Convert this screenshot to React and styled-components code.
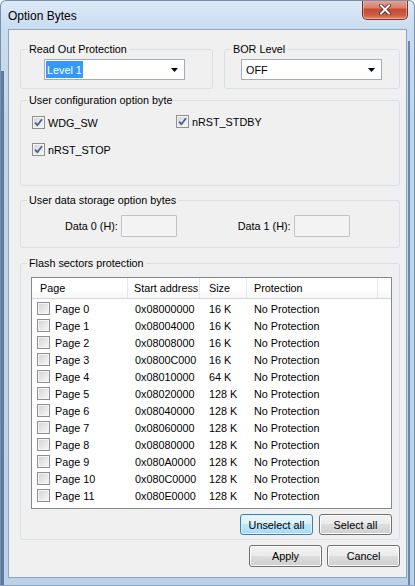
import React from 'react';
import styled, { createGlobalStyle } from 'styled-components';

const GlobalStyle = createGlobalStyle`
  html, body {
    margin: 0;
    padding: 0;
    background: #ffffff;
  }
  body {
    font-family: "Liberation Sans", Arial, sans-serif;
    font-size: 10.8px;
    color: #000;
  }
`;

const Window = styled.div`
  width: 415px;
  height: 586px;
  box-sizing: border-box;
  display: flex;
  flex-direction: column;
  padding: 0 7px 7px;
  border: 1px solid #7890ad;
  border-bottom-color: #8aa0ba;
  border-radius: 6px 6px 0 0;
  background:
    linear-gradient(to right, #5f7a9b, #5f7a9b) 0 70px / 3px 100% no-repeat,
    linear-gradient(to right, #6a86a8, #6a86a8) calc(100% - 4px) 40px / 2px 100% no-repeat,
    linear-gradient(180deg, #dce9f7 0, #cadcf0 28px, #c0d5ec 120px, #bcd2ea 100%);
  overflow: hidden;
`;

const TitleBar = styled.div`
  height: 28px;
  flex: none;
  display: flex;
  align-items: center;
  justify-content: space-between;
`;

const Title = styled.span`
  font-size: 12px;
  margin-top: 1px;
  color: #000;
`;

const CloseButton = styled.div`
  align-self: flex-start;
  width: 46px;
  height: 20px;
  margin-top: -1px;
  margin-right: -1px;
  box-sizing: border-box;
  display: flex;
  align-items: center;
  justify-content: center;
  border: 1px solid #7d3025;
  border-top: none;
  border-radius: 0 0 5px 5px;
  background: linear-gradient(180deg, #e6a798 0%, #d8806f 40%, #c64b35 50%, #cf5b43 80%, #e08a6c 100%);
  box-shadow: inset 0 0 0 1px rgba(255, 220, 210, 0.45);
`;

const Client = styled.div`
  flex: 1;
  box-sizing: border-box;
  background: #f0f0f0;
  border: 1px solid #8ea4bd;
  padding: 13px 6px 0 11px;
  display: flex;
  flex-direction: column;
`;

const GroupBox = styled.fieldset`
  margin: ${(p) => p.$top || 0}px 0 0 0;
  padding: 0;
  min-width: 0;
  border: 1px solid #d5dfe5;
  border-radius: 3px;
`;

const Legend = styled.legend`
  margin-left: 6px;
  padding: 0 2px;
  line-height: 13px;
`;

const GroupBody = styled.div`
  padding: ${(p) => p.$pad};
`;

const TopRow = styled.div`
  display: grid;
  grid-template-columns: 193px 1fr;
  column-gap: 11px;
`;

const Combo = styled.div`
  width: 141px;
  height: 21px;
  box-sizing: border-box;
  border: 1px solid #a5acb5;
  background: #fff;
  display: flex;
  align-items: stretch;
  padding: 1px;
`;

const ComboValue = styled.span`
  display: flex;
  align-items: center;
  padding: 0 1px;
  margin-left: ${(p) => (p.$selected ? 0 : 2)}px;
  background: ${(p) => (p.$selected ? '#3399ff' : 'transparent')};
  color: ${(p) => (p.$selected ? '#fff' : '#000')};
`;

const ComboArrow = styled.svg`
  margin: auto 5px auto auto;
`;

const CheckGrid = styled.div`
  display: grid;
  grid-template-columns: 144px 1fr;
  row-gap: 14px;
`;

const CheckItem = styled.label`
  display: flex;
  align-items: center;
  gap: 3px;
  height: 13px;
  margin-top: ${(p) => p.$shift || 0}px;
`;

const Box = styled.span`
  width: 13px;
  height: 13px;
  flex: none;
  box-sizing: border-box;
  border: 1px solid #8e8f8f;
  background: linear-gradient(135deg, #d2d2d2 0%, #e6e6e6 50%, #f8f8f8 100%);
  box-shadow: inset 0 0 0 1px #f4f4f4;
  display: flex;
  align-items: center;
  justify-content: center;
`;

const DataRow = styled.div`
  display: flex;
  align-items: center;
`;

const DataLabel = styled.span`
  margin-left: ${(p) => p.$ml}px;
  margin-right: 3px;
`;

const DataInput = styled.div`
  width: 56px;
  height: 22px;
  box-sizing: border-box;
  border: 1px solid #c2c2c2;
  border-radius: 1px;
  background: #f3f3f3;
`;

const ListView = styled.div`
  height: 232px;
  box-sizing: border-box;
  border: 1px solid #828790;
  background: #fff;
`;

const columns = '96px 72px 47px 131px 1fr';

const HeaderRow = styled.div`
  display: grid;
  grid-template-columns: ${columns};
  height: 20px;
  border-bottom: 1px solid #d5d5d5;
  background: linear-gradient(180deg, #ffffff 0%, #ffffff 50%, #f6f7f8 100%);
`;

const HeaderCell = styled.div`
  line-height: 20px;
  padding-left: ${(p) => p.$pl || 0}px;
  border-right: ${(p) => (p.$last ? 'none' : '1px solid #e3e6ea')};
  white-space: nowrap;
  overflow: hidden;
`;

const Rows = styled.div`
  padding-top: 1px;
`;

const Row = styled.div`
  display: grid;
  grid-template-columns: ${columns};
  height: 17px;
  align-items: center;
`;

const Cell = styled.div`
  padding-left: ${(p) => p.$pl}px;
  display: flex;
  align-items: center;
  gap: 5px;
  white-space: nowrap;
`;

const ButtonRow = styled.div`
  display: flex;
  justify-content: flex-end;
  gap: ${(p) => p.$gap}px;
  margin-top: ${(p) => p.$mt}px;
`;

const Button = styled.button`
  width: 73px;
  height: ${(p) => p.$h}px;
  box-sizing: border-box;
  padding: 0;
  font-family: "Liberation Sans", Arial, sans-serif;
  font-size: 10.8px;
  color: #000;
  border: 1px solid ${(p) => (p.$focused ? '#3c7fb1' : '#707070')};
  border-radius: 3px;
  background: ${(p) =>
    p.$focused
      ? 'linear-gradient(180deg, #eaf6fd 0%, #d9f0fc 50%, #bee6fd 50%, #a7d9f5 100%)'
      : 'linear-gradient(180deg, #f2f2f2 0%, #ebebeb 50%, #dddddd 50%, #cfcfcf 100%)'};
  box-shadow: inset 0 0 0 1px ${(p) => (p.$focused ? '#dff2fc' : '#fbfbfb')};
`;

const pages = [
  ['0x08000000', '16 K'],
  ['0x08004000', '16 K'],
  ['0x08008000', '16 K'],
  ['0x0800C000', '16 K'],
  ['0x08010000', '64 K'],
  ['0x08020000', '128 K'],
  ['0x08040000', '128 K'],
  ['0x08060000', '128 K'],
  ['0x08080000', '128 K'],
  ['0x080A0000', '128 K'],
  ['0x080C0000', '128 K'],
  ['0x080E0000', '128 K'],
];

const CheckBox = ({ checked }) => (
  <Box>
    {checked && (
      <svg width="9" height="9" viewBox="0 0 9 9">
        <path d="M1 4.6 L3.4 7.2 L8 1.3" fill="none" stroke="#4a5d8f" strokeWidth="1.8" />
      </svg>
    )}
  </Box>
);

const Arrow = () => (
  <ComboArrow width="7" height="4" viewBox="0 0 7 4">
    <polygon points="0,0 7,0 3.5,4" fill="#000" />
  </ComboArrow>
);

const App = () => {
  return (
    <>
      <GlobalStyle />
      <Window>
        <TitleBar>
          <Title>Option Bytes</Title>
          <CloseButton>
            <svg width="12" height="11" viewBox="0 0 12 11">
              <path d="M2 1.5 L10 9.5 M10 1.5 L2 9.5" stroke="#4a1a12" strokeWidth="3.6" strokeLinecap="square" />
              <path d="M2 1.5 L10 9.5 M10 1.5 L2 9.5" stroke="#ffffff" strokeWidth="2" strokeLinecap="square" />
            </svg>
          </CloseButton>
        </TitleBar>
        <Client>
          <TopRow>
            <GroupBox>
              <Legend>Read Out Protection</Legend>
              <GroupBody $pad="3px 0 8px 23px">
                <Combo>
                  <ComboValue $selected>Level 1</ComboValue>
                  <Arrow />
                </Combo>
              </GroupBody>
            </GroupBox>
            <GroupBox>
              <Legend>BOR Level</Legend>
              <GroupBody $pad="3px 0 8px 16px">
                <Combo>
                  <ComboValue>OFF</ComboValue>
                  <Arrow />
                </Combo>
              </GroupBody>
            </GroupBox>
          </TopRow>

          <GroupBox $top={5}>
            <Legend>User configuration option byte</Legend>
            <GroupBody $pad="9px 0 29px 11px">
              <CheckGrid>
                <CheckItem>
                  <CheckBox checked />
                  WDG_SW
                </CheckItem>
                <CheckItem $shift={-1}>
                  <CheckBox checked />
                  nRST_STDBY
                </CheckItem>
                <CheckItem>
                  <CheckBox checked />
                  nRST_STOP
                </CheckItem>
              </CheckGrid>
            </GroupBody>
          </GroupBox>

          <GroupBox $top={8}>
            <Legend>User data storage option bytes</Legend>
            <GroupBody $pad="8px 0 10px 0">
              <DataRow>
                <DataLabel $ml={44}>Data 0 (H):</DataLabel>
                <DataInput />
                <DataLabel $ml={61}>Data 1 (H):</DataLabel>
                <DataInput />
              </DataRow>
            </GroupBody>
          </GroupBox>

          <GroupBox $top={9}>
            <Legend>Flash sectors protection</Legend>
            <GroupBody $pad="7px 7px 4px 10px">
              <ListView>
                <HeaderRow>
                  <HeaderCell $pl={8}>Page</HeaderCell>
                  <HeaderCell $pl={6}>Start address</HeaderCell>
                  <HeaderCell $pl={9}>Size</HeaderCell>
                  <HeaderCell $pl={7}>Protection</HeaderCell>
                  <HeaderCell $last />
                </HeaderRow>
                <Rows>
                  {pages.map(([addr, size], i) => (
                    <Row key={addr}>
                      <Cell $pl={5}>
                        <CheckBox />
                        Page {i}
                      </Cell>
                      <Cell $pl={7}>{addr}</Cell>
                      <Cell $pl={9}>{size}</Cell>
                      <Cell $pl={7}>No Protection</Cell>
                    </Row>
                  ))}
                </Rows>
              </ListView>
              <ButtonRow $gap={6} $mt={5}>
                <Button $h={21} $focused>Unselect all</Button>
                <Button $h={21}>Select all</Button>
              </ButtonRow>
            </GroupBody>
          </GroupBox>

          <ButtonRow $gap={5} $mt={5}>
            <Button $h={22}>Apply</Button>
            <Button $h={22}>Cancel</Button>
          </ButtonRow>
        </Client>
      </Window>
    </>
  );
};

export default App;
